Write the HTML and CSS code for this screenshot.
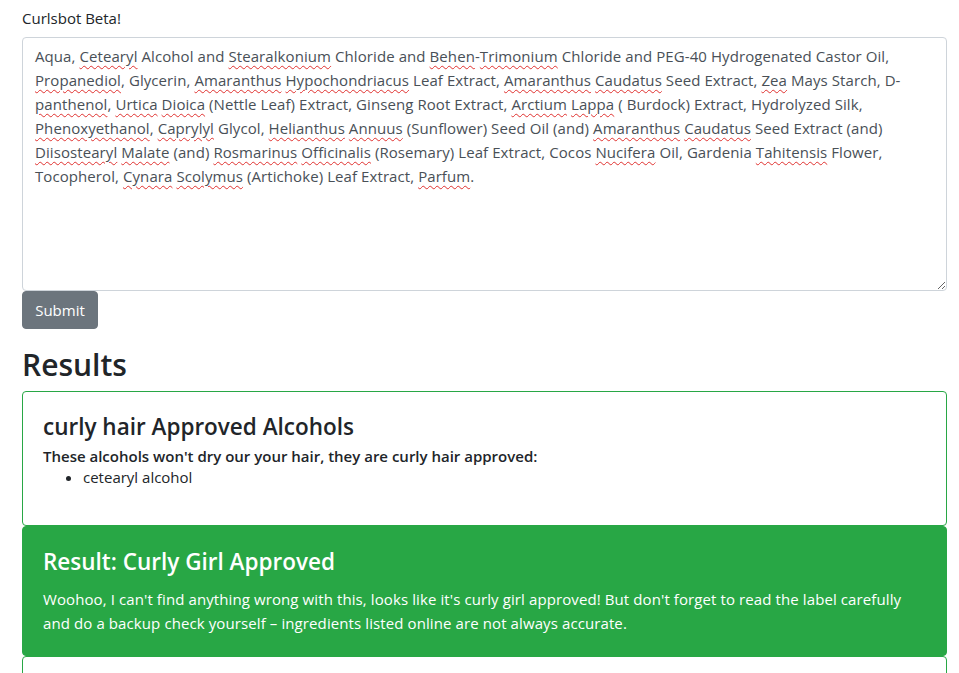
FILE: index.html
```html
<!DOCTYPE html>
<html lang="en">
<head>
<meta charset="utf-8">
<title>Curlsbot Beta!</title>
<link rel="stylesheet" href="styles.css">
</head>
<body>
<main class="page">
  <label class="label" for="ingredients">Curlsbot Beta!</label>
  <div class="ingredients" id="ingredients" role="textbox" aria-multiline="true">Aqua, <span class="sp">Cetearyl</span> Alcohol and <span class="sp">Stearalkonium</span> Chloride and <span class="sp">Behen</span>-<span class="sp">Trimonium</span> Chloride and PEG-40 Hydrogenated Castor Oil,<br><span class="sp">Propanediol</span>, Glycerin, <span class="sp">Amaranthus</span> <span class="sp">Hypochondriacus</span> Leaf Extract, <span class="sp">Amaranthus</span> <span class="sp">Caudatus</span> Seed Extract, <span class="sp">Zea</span> Mays Starch, D-<br><span class="sp">panthenol</span>, <span class="sp">Urtica</span> <span class="sp">Dioica</span> (Nettle Leaf) Extract, Ginseng Root Extract, <span class="sp">Arctium</span> <span class="sp">Lappa</span> ( Burdock) Extract, Hydrolyzed Silk,<br><span class="sp">Phenoxyethanol</span>, <span class="sp">Caprylyl</span> Glycol, <span class="sp">Helianthus</span> <span class="sp">Annuus</span> (Sunflower) Seed Oil (and) <span class="sp">Amaranthus</span> <span class="sp">Caudatus</span> Seed Extract (and)<br><span class="sp">Diisostearyl</span> <span class="sp">Malate</span> (and) <span class="sp">Rosmarinus</span> <span class="sp">Officinalis</span> (Rosemary) Leaf Extract, Cocos <span class="sp">Nucifera</span> Oil, Gardenia <span class="sp">Tahitensis</span> Flower,<br>Tocopherol, <span class="sp">Cynara</span> <span class="sp">Scolymus</span> (Artichoke) Leaf Extract, <span class="sp">Parfum</span>.</div>
  <button class="btn" type="button">Submit</button>

  <h2 class="results-title">Results</h2>

  <section class="card card-outline">
    <h4 class="card-title">curly hair Approved Alcohols</h4>
    <p class="card-lead">These alcohols won't dry our your hair, they are curly hair approved:</p>
    <ul class="card-list">
      <li>cetearyl alcohol</li>
    </ul>
  </section>

  <section class="card card-success">
    <h4 class="card-title card-title-spaced">Result: Curly Girl Approved</h4>
    <p class="card-text">Woohoo, I can't find anything wrong with this, looks like it's curly girl approved! But don't forget to read the label carefully and do a backup check yourself – ingredients listed online are not always accurate.</p>
  </section>

  <section class="card card-outline card-next"></section>
</main>
</body>
</html>
```
FILE: styles.css
```css
html {
  overflow: hidden;
}

body {
  margin: 0;
  font-family: "Open Sans", "Noto Sans", "Liberation Sans", sans-serif;
  font-size: 15px;
  line-height: 24px;
  color: #212529;
  background: #fff;
}

.page {
  padding: 6px 12px 0 22px;
}

.label {
  display: block;
  margin-bottom: 7px;
}

.ingredients {
  box-sizing: border-box;
  height: 254px;
  padding: 6px 12px;
  border: 1px solid #ced4da;
  border-radius: 4px;
  color: #495057;
  letter-spacing: 0.08px;
  white-space: nowrap;
  overflow: auto;
  resize: vertical;
}

.sp {
  text-decoration: underline wavy #e0312f;
  text-decoration-thickness: 1px;
  text-underline-offset: 3px;
}

.btn {
  display: block;
  box-sizing: border-box;
  width: 76px;
  height: 38px;
  margin: 0;
  padding: 0;
  border: 1px solid #6c757d;
  border-radius: 4px;
  background: #6c757d;
  color: #fff;
  font: inherit;
  font-size: 15px;
  line-height: 24px;
}

.results-title {
  margin: 17px 0 7px;
  font-size: 30px;
  font-weight: 600;
  line-height: 38px;
}

.card {
  border: 1px solid #28a745;
  border-radius: 4px;
  padding: 20px;
}

.card-outline {
  background: #fff;
}

.card-success {
  background: #28a745;
  border-color: #28a745;
  color: #fff;
}

.card-title {
  margin: 0 0 4px;
  font-size: 22.5px;
  font-weight: 600;
  line-height: 29px;
}

.card-title-spaced {
  margin-bottom: 11px;
}

.card-lead {
  margin: 0;
  font-weight: 600;
  line-height: 22px;
}

.card-list {
  margin: 0 0 17px;
  padding-left: 40px;
  line-height: 21px;
}

.card-text {
  margin: 0;
  letter-spacing: 0.1px;
}

.card-next {
  height: 120px;
  padding: 0;
}
```
